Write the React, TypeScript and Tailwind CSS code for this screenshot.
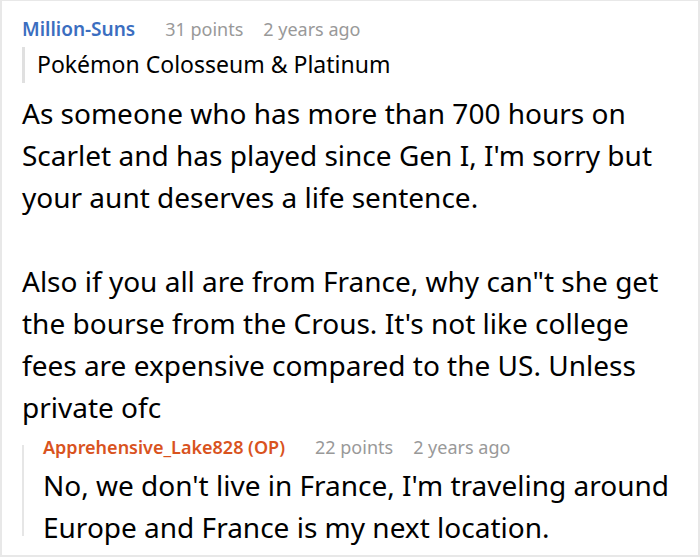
import React from 'react';

const Meta = ({ points, age }: { points: string; age: string }) => (
  <>
    <span className="ml-[30px] text-[18px] text-[#999]">{points}</span>
    <span className="ml-[20px] text-[18px] text-[#999]">{age}</span>
  </>
);

const CommentThread: React.FC = () => {
  return (
    <div
      className="w-[700px] h-[557px] bg-white border-2 border-[#e8e8e8] border-t-[1px] overflow-hidden text-black"
      style={{ fontFamily: '"Noto Sans", "Open Sans", sans-serif' }}
    >
      <div className="pl-[20px] pr-[20px] pt-[15px]">
        <div className="flex items-baseline leading-[26px]">
          <span className="text-[19px] font-semibold text-[#3b6ec0]">Million-Suns</span>
          <Meta points="31 points" age="2 years ago" />
        </div>

        <blockquote className="mt-[5px] border-l-[3px] border-[#e0e0e0] pl-[12px] pt-[3px] pb-[5px] text-[23px] leading-[28px]">
          Pokémon Colosseum &amp; Platinum
        </blockquote>

        <div className="mt-[9px] text-[28px] leading-[42px]">
          <p>
            As someone who has more than 700 hours on Scarlet and has played since Gen I, I'm sorry but
            your aunt deserves a life sentence.
          </p>
          <p className="mt-[42px]">
            Also if you all are from France, why can"t she get the bourse from the Crous. It's not like
            college fees are expensive compared to the US. Unless private ofc
          </p>
        </div>

        {/* reply from the original poster */}
        <div className="flex">
          <div className="w-[2px] shrink-0 mt-[17px] mb-[12px] bg-[#e6e6e6]" />
          <div className="pl-[19px]">
            <div className="mt-[7px] flex items-baseline leading-[24px]">
              <span className="text-[18px] font-semibold text-[#d9531e]">Apprehensive_Lake828 (OP)</span>
              <Meta points="22 points" age="2 years ago" />
            </div>
            <p className="mt-[5px] text-[28px] leading-[42px]">
              No, we don't live in France, I'm traveling around Europe and France is my next location.
            </p>
          </div>
        </div>
      </div>
    </div>
  );
};

export default CommentThread;
